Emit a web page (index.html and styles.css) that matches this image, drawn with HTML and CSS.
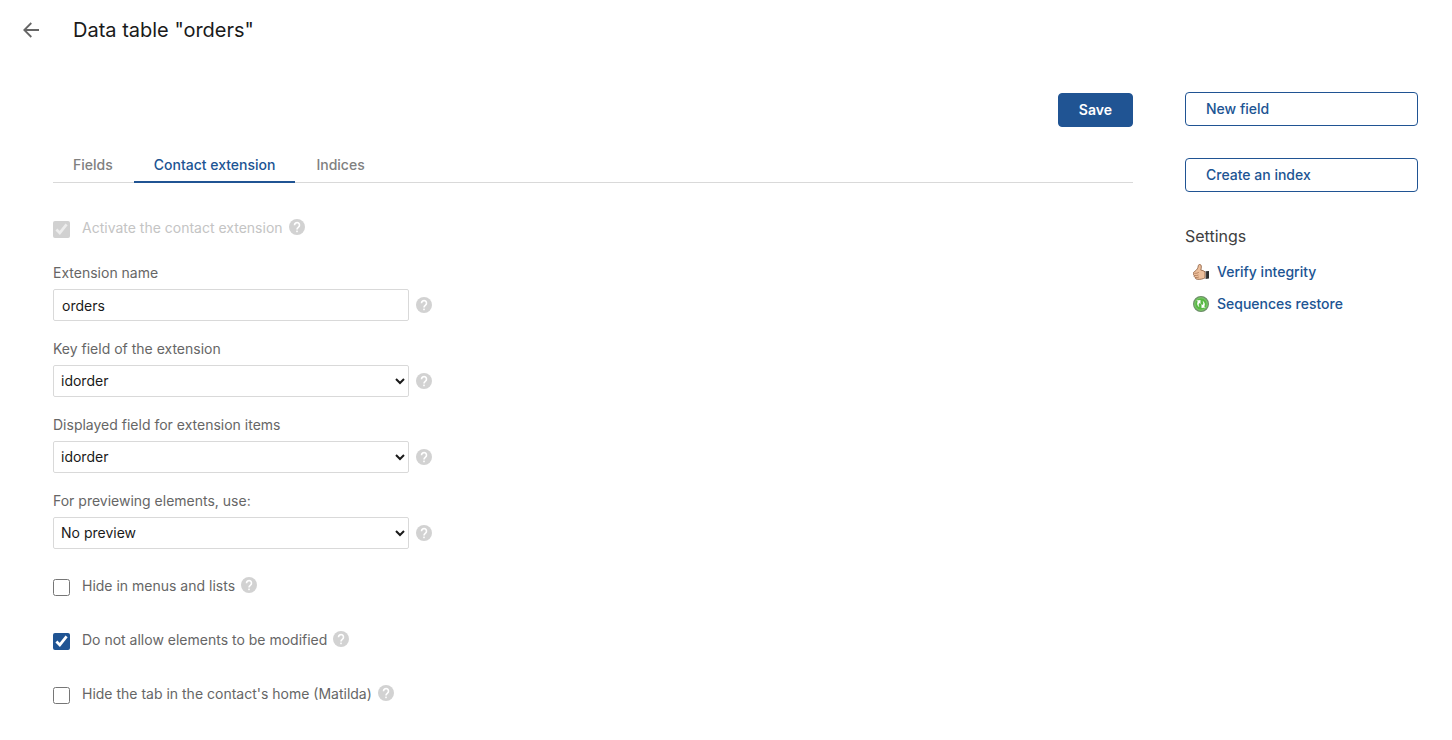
FILE: index.html
```html
<!DOCTYPE html>
<html lang="en">
<head>
<meta charset="utf-8">
<title>Data table "orders"</title>
<link rel="stylesheet" href="styles.css">
</head>
<body>
<!-- Shared help icon -->
<svg class="sprite" aria-hidden="true">
	<symbol id="help" viewBox="0 0 16 16">
		<circle cx="8" cy="8" r="8" fill="#d2d2d2"/>
		<path d="M5.500 6.200a2.500 2.500 0 1 1 4 1.900C8.500 8.900 8 9.200 8 10.500" fill="none" stroke="#fff" stroke-width="1.600"/>
		<rect x="7.200" y="11.600" width="1.600" height="1.600" fill="#fff"/>
	</symbol>
</svg>

<header class="header">
	<a href="#" class="back" aria-label="Back">
		<svg width="18" height="18" viewBox="0 0 18 18"><path d="M17 9H2.500M9.300 2L2.300 9L9.300 16" fill="none" stroke="#666" stroke-width="1.800"/></svg>
	</a>
	<h1>Data table "orders"</h1>
</header>

<div class="page">
	<main>
		<form>
			<div class="actions">
				<button type="submit" class="btn btn-primary">Save</button>
			</div>
			<nav class="tabs">
				<a href="#">Fields</a>
				<a href="#" class="active">Contact extension</a>
				<a href="#">Indices</a>
			</nav>

			<div class="check disabled">
				<input type="checkbox" id="activate" checked disabled>
				<label for="activate">Activate the contact extension</label>
				<svg class="help"><use href="#help"/></svg>
			</div>

			<div class="field">
				<label for="extName">Extension name</label>
				<div class="control">
					<input type="text" id="extName" value="orders">
					<svg class="help"><use href="#help"/></svg>
				</div>
			</div>
			<div class="field">
				<label for="keyField">Key field of the extension</label>
				<div class="control">
					<select id="keyField"><option>idorder</option></select>
					<svg class="help"><use href="#help"/></svg>
				</div>
			</div>
			<div class="field">
				<label for="displayField">Displayed field for extension items</label>
				<div class="control">
					<select id="displayField"><option>idorder</option></select>
					<svg class="help"><use href="#help"/></svg>
				</div>
			</div>
			<div class="field">
				<label for="preview">For previewing elements, use:</label>
				<div class="control">
					<select id="preview"><option>No preview</option></select>
					<svg class="help"><use href="#help"/></svg>
				</div>
			</div>

			<div class="options">
				<div class="check">
					<input type="checkbox" id="hideMenus">
					<label for="hideMenus">Hide in menus and lists</label>
					<svg class="help"><use href="#help"/></svg>
				</div>
				<div class="check">
					<input type="checkbox" id="readOnly" checked>
					<label for="readOnly">Do not allow elements to be modified</label>
					<svg class="help"><use href="#help"/></svg>
				</div>
				<div class="check">
					<input type="checkbox" id="hideTab">
					<label for="hideTab">Hide the tab in the contact's home (Matilda)</label>
					<svg class="help"><use href="#help"/></svg>
				</div>
			</div>
		</form>
	</main>

	<aside class="sidebar">
		<button type="button" class="btn btn-outline">New field</button>
		<button type="button" class="btn btn-outline">Create an index</button>
		<h2>Settings</h2>
		<ul class="links">
			<li><a href="#">
				<svg width="16" height="16" viewBox="0 0 16 16">
					<path d="M12.500 7.300L16 7v7.500l-3.500.5z" fill="#2e2e2e"/>
					<path d="M11.600 7.500h1.500v7h-1.500z" fill="#bbb"/>
					<path d="M.4 9.300C.4 8.300 1 7.800 2 7.200C4 6 5 4 5.300 1.700C5.500 0 8 0 8.300 1.900c.2 1.600-.2 3-.5 4.200c1.600.1 3 .7 4.200 1.700v6c-2 1.200-4.800 1.900-7.800 1.500c-1.400-.2-2-.9-1.800-1.800c-1-.3-1.500-1-1.200-1.900C.4 11 .1 10.200.4 9.300z" fill="#edbf9b" stroke="#8a5b3c" stroke-width=".8"/>
					<path d="M1.200 11.500c1.500.2 3 .1 4.300-.5M2.400 13.500c1.300.2 2.500 0 3.500-.5M1.300 9.300c1.700.2 3.200-.2 4.500-1" fill="none" stroke="#a06c49" stroke-width=".7"/>
				</svg>
				Verify integrity</a></li>
			<li><a href="#">
				<svg width="16" height="16" viewBox="0 0 16 16">
					<circle cx="8" cy="8" r="7.400" fill="#58b943" stroke="#6f8f6c" stroke-width="1.200"/>
					<circle cx="8" cy="8" r="6.200" fill="none" stroke="#8fce7e" stroke-width=".8"/>
					<path d="M7.500 4v4L6.200 6.900C5.400 8.200 5.500 9.700 6.600 11.200C4.300 10.200 3.500 7.700 4.700 5.500L3.500 4.500zM8.500 12V8l1.300 1.100c.8-1.300.7-2.800-.4-4.300c2.300 1 3.100 3.500 1.900 5.700l1.200 1z" fill="#fff"/>
				</svg>
				Sequences restore</a></li>
		</ul>
	</aside>
</div>
</body>
</html>
```
FILE: styles.css
```css
* {box-sizing: border-box;}
body {margin: 0;font-family: Inter, "Liberation Sans", sans-serif;font-size: 14px;line-height: 20px;color: #666;background: #fff;}
a {color: #205493;text-decoration: none;}
h1, h2 {margin: 0;font-weight: 400;}
.sprite {display: none;}

.header {display: flex;align-items: center;height: 60px;padding-left: 22px;gap: 33px;}
.header h1 {font-size: 20px;line-height: 28px;color: #1a1a1a;}
.back {display: flex;}

.page {display: grid;grid-template-columns: 1fr 233px;gap: 52px;padding: 32px 34px 32px 53px;}

.btn {height: 34px;padding: 0 20px;border: 1px solid #205493;border-radius: 4px;font: 500 14px/20px Inter, "Liberation Sans", sans-serif;cursor: pointer;}
.btn-primary {background: #205493;color: #fff;font-weight: 600;}
.btn-outline {background: #fff;color: #205493;text-align: left;}

.actions {display: flex;justify-content: flex-end;padding-top: 1px;}
.tabs {display: flex;gap: 1px;margin-top: 20px;border-bottom: 1px solid #d9d9d9;}
.tabs a {padding: 8px 20px 6px;margin-bottom: -1px;border-bottom: 2px solid transparent;font-weight: 500;color: #808080;}
.tabs .active {color: #205493;border-color: #205493;}

.check {display: flex;align-items: center;height: 20px;}
.check input {width: 17px;height: 17px;margin: 2px 12px 0 0;accent-color: #205493;}
.check .help {margin: 0 0 2px 6px;}
.check.disabled {margin: 35px 0 25px;color: #c4c4c4;}
.help {flex: none;width: 16px;height: 16px;}

.field {margin-bottom: 18px;}
.field label {display: block;margin-bottom: 6px;}
.control {display: flex;align-items: center;gap: 7px;}
.control input, .control select {width: 356px;height: 32px;border: 1px solid #d9d9d9;border-radius: 2px;background: #fff;color: #1a1a1a;font: 14px Inter, "Liberation Sans", sans-serif;}
.control input {padding: 0 8px;}
.control select {padding: 0 3px 1px;}

.options {display: flex;flex-direction: column;gap: 34px;padding-top: 9px;}

.sidebar {display: flex;flex-direction: column;}
.sidebar .btn {margin-bottom: 32px;}
.sidebar h2 {font-size: 16px;line-height: 24px;color: #404040;}
.links {display: flex;flex-direction: column;gap: 12px;margin: 14px 0 0;padding: 0 0 0 8px;list-style: none;}
.links a {display: flex;align-items: center;gap: 8px;font-weight: 500;}
```
